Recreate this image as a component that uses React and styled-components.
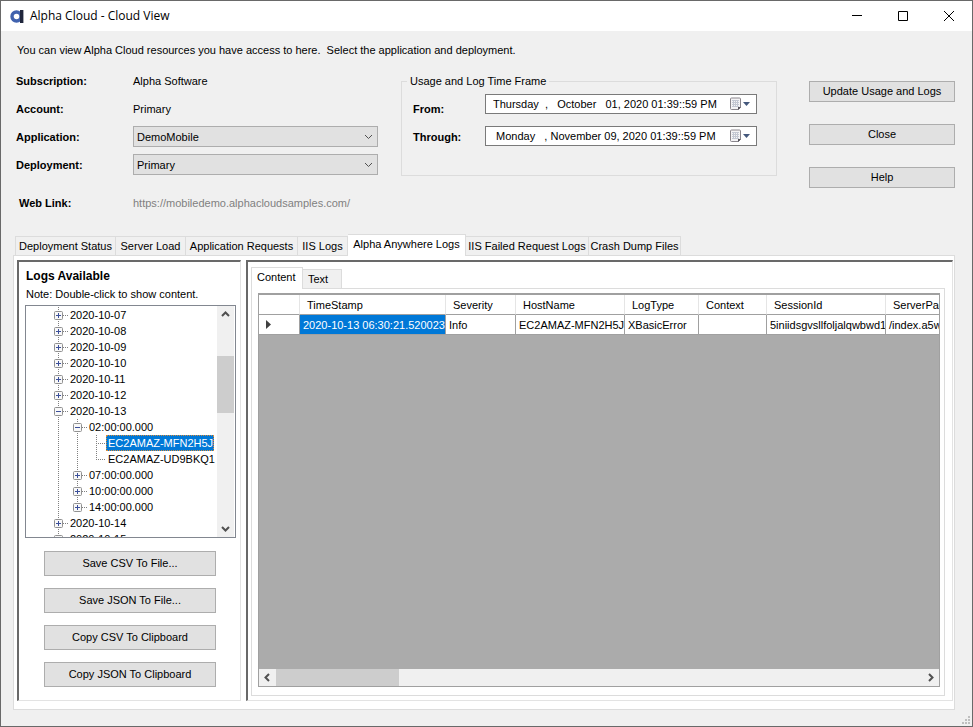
import React, {useState} from 'react';
import styled, {createGlobalStyle, css} from 'styled-components';

const GlobalStyle = createGlobalStyle`
  * {
    box-sizing: border-box;
  }

  body {
    margin: 0;
    background: #f0f0f0;
    color: #000;
    font: 11px/16px 'Liberation Sans', Arial, sans-serif;
  }

  button,
  input,
  select {
    font: inherit;
    color: inherit;
    border-radius: 0;
    margin: 0;
  }
`;

const control = css`
  background: #e1e1e1;
  border: 1px solid #adadad;
`;

const sunken = css`
  border: 1px solid #e3e3e3;
  border-top: 2px solid #696969;
  border-left: 2px solid #696969;
`;

const frame = {
  root: styled.div`
    display: flex;
    flex-direction: column;
    height: 100vh;
    min-height: 640px;
    border: 1px solid #696969;
    background: #f0f0f0;
  `,
  titleBar: styled.header`
    display: flex;
    align-items: center;
    height: 30px;
    flex: none;
    padding-left: 9px;
    background: #fff;
  `,
  title: styled.h1`
    flex: 1;
    margin: 0 0 0 5px;
    font: 12px/16px 'Open Sans', sans-serif;
  `,
  windowButton: styled.button`
    display: flex;
    align-items: center;
    justify-content: center;
    width: 46px;
    height: 30px;
    padding: 0;
    border: 0;
    background: transparent;
  `,
  body: styled.main`
    display: flex;
    flex-direction: column;
    flex: 1;
    min-height: 0;
    padding: 11px 17px 16px 12px;
  `,
  grip: styled.svg`
    position: absolute;
    right: 3px;
    bottom: 3px;
  `,
};

const top = {
  intro: styled.p`
    margin: 0 0 12px 4px;
    white-space: pre;
  `,
  row: styled.section`
    display: flex;
    align-items: flex-start;
    margin-left: 3px;
  `,
  details: styled.div`
    display: grid;
    grid-template-columns: 117px 245px;
    grid-template-rows: repeat(4, 28px) 48px;
    align-items: center;
    margin-top: -3px;
  `,
  label: styled.label`
    font-weight: bold;
    padding-left: ${(p) => (p.$indent ? 3 : 0)}px;
  `,
  selectBox: styled.span`
    display: grid;
    grid-template-columns: 1fr 13px;
    align-items: center;
    height: 21px;
    margin-bottom: 1px;
    ${control}

    select,
    svg {
      grid-row: 1;
    }

    select {
      grid-column: 1 / 3;
      width: 100%;
      height: 19px;
      padding: 0 20px 0 3px;
      appearance: none;
      border: 0;
      background: transparent;
    }

    svg {
      grid-column: 2;
      pointer-events: none;
    }
  `,
  link: styled.a`
    color: #808080;
    text-decoration: none;
  `,
  group: styled.fieldset`
    flex: 1;
    display: grid;
    grid-template-columns: 72px 1fr;
    align-items: start;
    height: 103px;
    margin: 3px 32px 0 23px;
    padding: 5px 19px 0 11px;
    border: 1px solid #dcdcdc;

    legend {
      margin-left: -6px;
      padding: 0 3px;
    }
  `,
  labels: styled.div`
    display: grid;
    grid-auto-rows: 28px;
    align-items: center;
    padding-top: 1px;
  `,
  pickers: styled.div`
    display: flex;
    flex-direction: column;
    gap: 12px;
  `,
  picker: styled.span`
    display: flex;
    align-items: center;
    height: 20px;
    border: 1px solid #7a7a7a;
    background: #fff;

    input {
      flex: 1;
      min-width: 0;
      padding: 0 0 0 7px;
      border: 0;
      background: transparent;
    }

    button {
      display: flex;
      align-items: center;
      padding: 0 5px 0 0;
      border: 0;
      background: transparent;
    }
  `,
  actions: styled.div`
    display: flex;
    flex-direction: column;
    gap: 22px;
    width: 146px;
    padding-top: 11px;
  `,
};

const Button = styled.button`
  height: ${(p) => (p.$tall ? 25 : 21)}px;
  padding: 0 0 2px;
  flex: none;
  ${control}
`;

const tabs = {
  list: styled.div`
    display: flex;
    align-items: flex-end;
    flex: none;
    height: 21px;
    padding-left: ${(p) => (p.$inner ? 0 : 2)}px;
  `,
  tab: styled.button`
    width: ${(p) => p.$width}px;
    height: 19px;
    padding: 0 ${(p) => (p.$inner ? 5 : 0)}px;
    border: 1px solid #dcdcdc;
    border-left-width: 0;
    border-bottom: 0;
    background: #f0f0f0;
    text-align: ${(p) => (p.$inner ? 'left' : 'center')};
    white-space: nowrap;

    &:first-child {
      border-left-width: 1px;
    }

    &[aria-selected='true'] {
      z-index: 1;
      height: 22px;
      margin-bottom: -1px;
      padding-bottom: 3px;
      background: #fff;
    }
  `,
  panel: styled.div`
    display: flex;
    flex: 1;
    min-width: 0;
    min-height: 0;
    border: 1px solid #dcdcdc;
    background: #fff;
  `,
};

const logs = {
  sidebar: styled.aside`
    display: flex;
    flex-direction: column;
    flex: none;
    width: 224px;
    margin-right: 5px;
    padding: 6px 4px 13px 6px;
    ${sunken}
  `,
  heading: styled.h2`
    margin: 0 0 2px 1px;
    font: bold 12px/16px 'Liberation Sans', Arial, sans-serif;
  `,
  note: styled.p`
    margin: 0 0 3px 1px;
  `,
  treeBox: styled.div`
    display: flex;
    flex: 1;
    min-height: 0;
    border: 1px solid #828790;
    padding-right: 1px;
  `,
  exports: styled.div`
    display: flex;
    flex-direction: column;
    gap: 12px;
    margin: 13px 20px 0 19px;
  `,
  content: styled.section`
    display: flex;
    flex-direction: column;
    flex: 1;
    min-width: 0;
    padding: 5px 7px 4px 3px;
    ${sunken}
  `,
  grid: styled.div`
    display: flex;
    flex-direction: column;
    flex: 1;
    min-width: 0;
    border: 1px solid #a0a0a0;
    border-top-width: 2px;
    background: #ababab;
  `,
  gridView: styled.div`
    flex: 1;
    min-height: 0;
    overflow: hidden;
  `,
};

const vDots = 'linear-gradient(#808080 50%, transparent 50%)';
const hDots = 'linear-gradient(90deg, #808080 50%, transparent 50%)';

const tree = {
  list: styled.ul`
    flex: 1;
    min-width: 0;
    margin: 0;
    padding: 0 0 0 19px;
    list-style: none;

    ${(p) => p.$root && css`
      overflow: hidden;
      padding: 1px 0 0 28px;
    `}
  `,
  item: styled.li`
    background: ${vDots} 4px 0 / 1px 2px repeat-y;

    &:last-child {
      background: linear-gradient(#fff, #fff) 0 8px / 100% 100% no-repeat,
        ${vDots} 4px 0 / 1px 2px repeat-y;
    }
  `,
  row: styled.div`
    display: flex;
    align-items: center;
    height: 16px;
  `,
  toggle: styled.button`
    display: flex;
    width: 9px;
    height: 9px;
    padding: 0;
    border: 0;
    background: #fff;
  `,
  stub: styled.span`
    width: ${(p) => (p.$leaf ? 10 : 5)}px;
    height: 1px;
    margin-left: ${(p) => (p.$leaf ? 4 : 0)}px;
    background: ${hDots} 0 0 / 2px 1px repeat-x;
  `,
  text: styled.span`
    padding: 0 1px 0 2px;
    white-space: nowrap;

    ${(p) => p.$selected && css`
      background: #0078d7;
      color: #fff;
      outline: 1px dotted #d98c3a;
      outline-offset: -1px;
    `}
  `,
};

const Table = styled.table`
  table-layout: fixed;
  width: 747px;
  border-collapse: separate;
  border-spacing: 0;
  background: #fff;

  th,
  td {
    height: 20px;
    padding: 0 3px;
    text-align: left;
    font-weight: normal;
    white-space: nowrap;
    overflow: hidden;
    border-right: 1px solid #a0a0a0;
    border-bottom: 1px solid #a0a0a0;
  }

  th {
    padding-left: 7px;
    border-right-color: #e5e5e5;
  }

  td[aria-selected='true'] {
    background: #0078d7;
    color: #fff;
  }
`;

const scroll = {
  bar: styled.div`
    display: flex;
    flex: none;
    flex-direction: ${(p) => (p.$vertical ? 'column' : 'row')};
    ${(p) => (p.$vertical ? 'width: 17px;' : 'height: 17px;')}
    background: #f0f0f0;
  `,
  arrow: styled.button`
    display: flex;
    align-items: center;
    justify-content: center;
    flex: none;
    width: 17px;
    height: 17px;
    padding: 0;
    border: 0;
    background: transparent;
  `,
  gap: styled.span`
    flex: ${(p) => p.$grow};
  `,
  thumb: styled.span`
    flex: ${(p) => p.$grow};
    background: #cdcdcd;
  `,
};

const arrows = {
  up: 'M1 6 L4.5 2.5 L8 6',
  down: 'M1 3 L4.5 6.5 L8 3',
  left: 'M6 1 L2.5 4.5 L6 8',
  right: 'M3 1 L6.5 4.5 L3 8',
};

const Chevron = ({dir, thin}) => (
  <svg width="9" height="9" viewBox="0 0 9 9" fill="none" stroke="#505050" strokeWidth={thin ? 1 : 2}>
    <path d={arrows[dir]} />
  </svg>
);

// blue ring with a dark stem on its right side
const Logo = () => (
  <svg width="15" height="15" viewBox="0 0 15 15" fill="none">
    <circle cx="6.5" cy="7.5" r="4.5" stroke="#4062ae" strokeWidth="3.4" />
    <path d="M10 1h3.4v13H10z" fill="#20263c" />
  </svg>
);

const CalendarIcon = () => (
  <svg width="21" height="14" viewBox="0 0 21 14">
    <path d="M0.5 2a1 1 0 0 1 1-1h8a1 1 0 0 1 1 1v8.5l-2 2h-7a1 1 0 0 1-1-1z" fill="#f4f3f5" stroke="#8a868c" />
    <path d="M2 3.5h7M2 5.5h7M2 7.5h7M2 9.5h7M3.5 3v7M5.5 3v7M7.5 3v7" stroke="#c3c7d2" />
    <path d="M8 13v-3h3z" fill="#55525a" />
    <path d="M13 5h7l-3.5 4z" fill="#44587c" />
  </svg>
);

const Expander = ({open}) => (
  <svg width="9" height="9" viewBox="0 0 9 9" fill="none">
    <rect x="0.5" y="0.5" width="8" height="8" rx="1" fill="#f8f8f8" stroke="#919191" />
    <path d={open ? 'M2 4.5h5' : 'M2 4.5h5M4.5 2v5'} stroke="#3b4f9a" />
  </svg>
);

const Select = ({id, options}) => (
  <top.selectBox>
    <select id={id}>
      {options.map((o) => <option key={o}>{o}</option>)}
    </select>
    <Chevron dir="down" thin />
  </top.selectBox>
);

const DateField = ({id, value}) => (
  <top.picker>
    <input id={id} type="text" defaultValue={value} />
    <button type="button" aria-label="Open calendar"><CalendarIcon /></button>
  </top.picker>
);

const ScrollBar = ({vertical, before, size, after}) => (
  <scroll.bar $vertical={vertical}>
    <scroll.arrow type="button" aria-label="Scroll back"><Chevron dir={vertical ? 'up' : 'left'} /></scroll.arrow>
    <scroll.gap $grow={before} />
    <scroll.thumb $grow={size} />
    <scroll.gap $grow={after} />
    <scroll.arrow type="button" aria-label="Scroll forward"><Chevron dir={vertical ? 'down' : 'right'} /></scroll.arrow>
  </scroll.bar>
);

const TREE = [
  {name: '2020-10-07', nodes: []},
  {name: '2020-10-08', nodes: []},
  {name: '2020-10-09', nodes: []},
  {name: '2020-10-10', nodes: []},
  {name: '2020-10-11', nodes: []},
  {name: '2020-10-12', nodes: []},
  {
    name: '2020-10-13',
    open: true,
    nodes: [
      {name: '02:00:00.000', open: true, nodes: [{name: 'EC2AMAZ-MFN2H5J'}, {name: 'EC2AMAZ-UD9BKQ1'}]},
      {name: '07:00:00.000', nodes: []},
      {name: '10:00:00.000', nodes: []},
      {name: '14:00:00.000', nodes: []},
    ],
  },
  {name: '2020-10-14', nodes: []},
  {name: '2020-10-15', nodes: []},
];

const TreeNode = ({node, selected, onSelect}) => {
  const [open, setOpen] = useState(!!node.open);

  return (
    <tree.item role="treeitem" aria-expanded={node.nodes ? open : undefined}>
      <tree.row>
        {node.nodes && (
          <tree.toggle type="button" aria-label={`Toggle ${node.name}`} onClick={() => setOpen(!open)}>
            <Expander open={open} />
          </tree.toggle>
        )}
        <tree.stub $leaf={!node.nodes} />
        <tree.text $selected={selected === node.name} onClick={() => onSelect(node.name)}>
          {node.name}
        </tree.text>
      </tree.row>
      {open && node.nodes && node.nodes.length > 0 && (
        <tree.list role="group">
          {node.nodes.map((n) => (
            <TreeNode key={n.name} node={n} selected={selected} onSelect={onSelect} />
          ))}
        </tree.list>
      )}
    </tree.item>
  );
};

const COLUMNS = [
  {name: 'TimeStamp', width: 146, value: '2020-10-13 06:30:21.520023'},
  {name: 'Severity', width: 70, value: 'Info'},
  {name: 'HostName', width: 109, value: 'EC2AMAZ-MFN2H5J'},
  {name: 'LogType', width: 74, value: 'XBasicError'},
  {name: 'Context', width: 68, value: ''},
  {name: 'SessionId', width: 119, value: '5iniidsgvsllfoljalqwbwd1'},
  {name: 'ServerPage', width: 120, value: '/index.a5w'},
];

const LogGrid = () => (
  <logs.grid>
    <logs.gridView>
      <Table>
        <colgroup>
          <col width="41" />
          {COLUMNS.map((c) => <col key={c.name} width={c.width} />)}
        </colgroup>
        <thead>
          <tr>
            <th aria-label="Row" />
            {COLUMNS.map((c) => <th key={c.name}>{c.name}</th>)}
          </tr>
        </thead>
        <tbody>
          <tr>
            <td>
              <svg width="12" height="10" viewBox="0 0 12 10" aria-hidden="true">
                <path d="M4 1l5 4.5L4 10z" fill="#404040" />
              </svg>
            </td>
            {COLUMNS.map((c, i) => <td key={c.name} aria-selected={i === 0}>{c.value}</td>)}
          </tr>
        </tbody>
      </Table>
    </logs.gridView>
    <ScrollBar before={0} size={123} after={524} />
  </logs.grid>
);

const TabList = ({items, active, onChange, inner}) => (
  <tabs.list role="tablist" $inner={inner}>
    {items.map(({name, width}) => (
      <tabs.tab
        key={name}
        type="button"
        role="tab"
        $width={width}
        $inner={inner}
        aria-selected={name === active}
        onClick={() => onChange(name)}
      >
        {name}
      </tabs.tab>
    ))}
  </tabs.list>
);

const MAIN_TABS = [
  {name: 'Deployment Status', width: 101},
  {name: 'Server Load', width: 70},
  {name: 'Application Requests', width: 112},
  {name: 'IIS Logs', width: 50},
  {name: 'Alpha Anywhere Logs', width: 118},
  {name: 'IIS Failed Request Logs', width: 123},
  {name: 'Crash Dump Files', width: 92},
];

const VIEW_TABS = [
  {name: 'Content', width: 52},
  {name: 'Text', width: 39},
];

const MainTabs = styled.section`
  display: flex;
  flex-direction: column;
  flex: 1;
  min-height: 0;
  margin-top: 7px;

  > ${tabs.panel} {
    padding: 4px 1px 8px 3px;
  }
`;

const InnerPanel = styled(tabs.panel)`
  padding: 4px 4px 8px 6px;
`;

const App = () => {
  const [mainTab, setMainTab] = useState('Alpha Anywhere Logs');
  const [viewTab, setViewTab] = useState('Content');
  const [selected, setSelected] = useState('EC2AMAZ-MFN2H5J');

  return (
    <frame.root>
      <GlobalStyle />
      <frame.titleBar>
        <Logo />
        <frame.title>Alpha Cloud - Cloud View</frame.title>
        <frame.windowButton type="button" aria-label="Minimize">
          <svg width="10" height="10" stroke="#000"><path d="M0 4.5h10" /></svg>
        </frame.windowButton>
        <frame.windowButton type="button" aria-label="Maximize">
          <svg width="10" height="10" stroke="#000" fill="none"><path d="M0.5 0.5h9v9h-9z" /></svg>
        </frame.windowButton>
        <frame.windowButton type="button" aria-label="Close window">
          <svg width="10" height="10" stroke="#000"><path d="M0 0l10 10M10 0L0 10" /></svg>
        </frame.windowButton>
      </frame.titleBar>
      <frame.body>
        <top.intro>
          {'You can view Alpha Cloud resources you have access to here.  Select the application and deployment.'}
        </top.intro>
        <top.row>
          <top.details>
            <top.label as="span">Subscription:</top.label>
            <span>Alpha Software</span>
            <top.label as="span">Account:</top.label>
            <span>Primary</span>
            <top.label htmlFor="application">Application:</top.label>
            <Select id="application" options={['DemoMobile']} />
            <top.label htmlFor="deployment">Deployment:</top.label>
            <Select id="deployment" options={['Primary']} />
            <top.label as="span" $indent>Web Link:</top.label>
            <top.link href="https://mobiledemo.alphacloudsamples.com/">
              https://mobiledemo.alphacloudsamples.com/
            </top.link>
          </top.details>
          <top.group>
            <legend>Usage and Log Time Frame</legend>
            <top.labels>
              <top.label htmlFor="from">From:</top.label>
              <top.label htmlFor="through">Through:</top.label>
            </top.labels>
            <top.pickers>
              <DateField id="from" value="Thursday  ,   October   01, 2020 01:39::59 PM" />
              <DateField id="through" value=" Monday   , November 09, 2020 01:39::59 PM" />
            </top.pickers>
          </top.group>
          <top.actions>
            <Button type="button">Update Usage and Logs</Button>
            <Button type="button">Close</Button>
            <Button type="button">Help</Button>
          </top.actions>
        </top.row>
        <MainTabs>
          <TabList items={MAIN_TABS} active={mainTab} onChange={setMainTab} />
          <tabs.panel>
            <logs.sidebar>
              <logs.heading>Logs Available</logs.heading>
              <logs.note>Note: Double-click to show content.</logs.note>
              <logs.treeBox>
                <tree.list role="tree" $root>
                  {TREE.map((n) => (
                    <TreeNode key={n.name} node={n} selected={selected} onSelect={setSelected} />
                  ))}
                </tree.list>
                <ScrollBar vertical before={33} size={57} after={107} />
              </logs.treeBox>
              <logs.exports>
                <Button type="button" $tall>Save CSV To File...</Button>
                <Button type="button" $tall>Save JSON To File...</Button>
                <Button type="button" $tall>Copy CSV To Clipboard</Button>
                <Button type="button" $tall>Copy JSON To Clipboard</Button>
              </logs.exports>
            </logs.sidebar>
            <logs.content>
              <TabList items={VIEW_TABS} active={viewTab} onChange={setViewTab} inner />
              <InnerPanel>
                <LogGrid />
              </InnerPanel>
            </logs.content>
          </tabs.panel>
        </MainTabs>
      </frame.body>
      <frame.grip width="8" height="8" fill="#bfbfbf" aria-hidden="true">
        <path d="M6 0h2v2H6zM3 3h2v2H3zM6 3h2v2H6zM0 6h2v2H0zM3 6h2v2H3zM6 6h2v2H6z" />
      </frame.grip>
    </frame.root>
  );
};

export default App;
